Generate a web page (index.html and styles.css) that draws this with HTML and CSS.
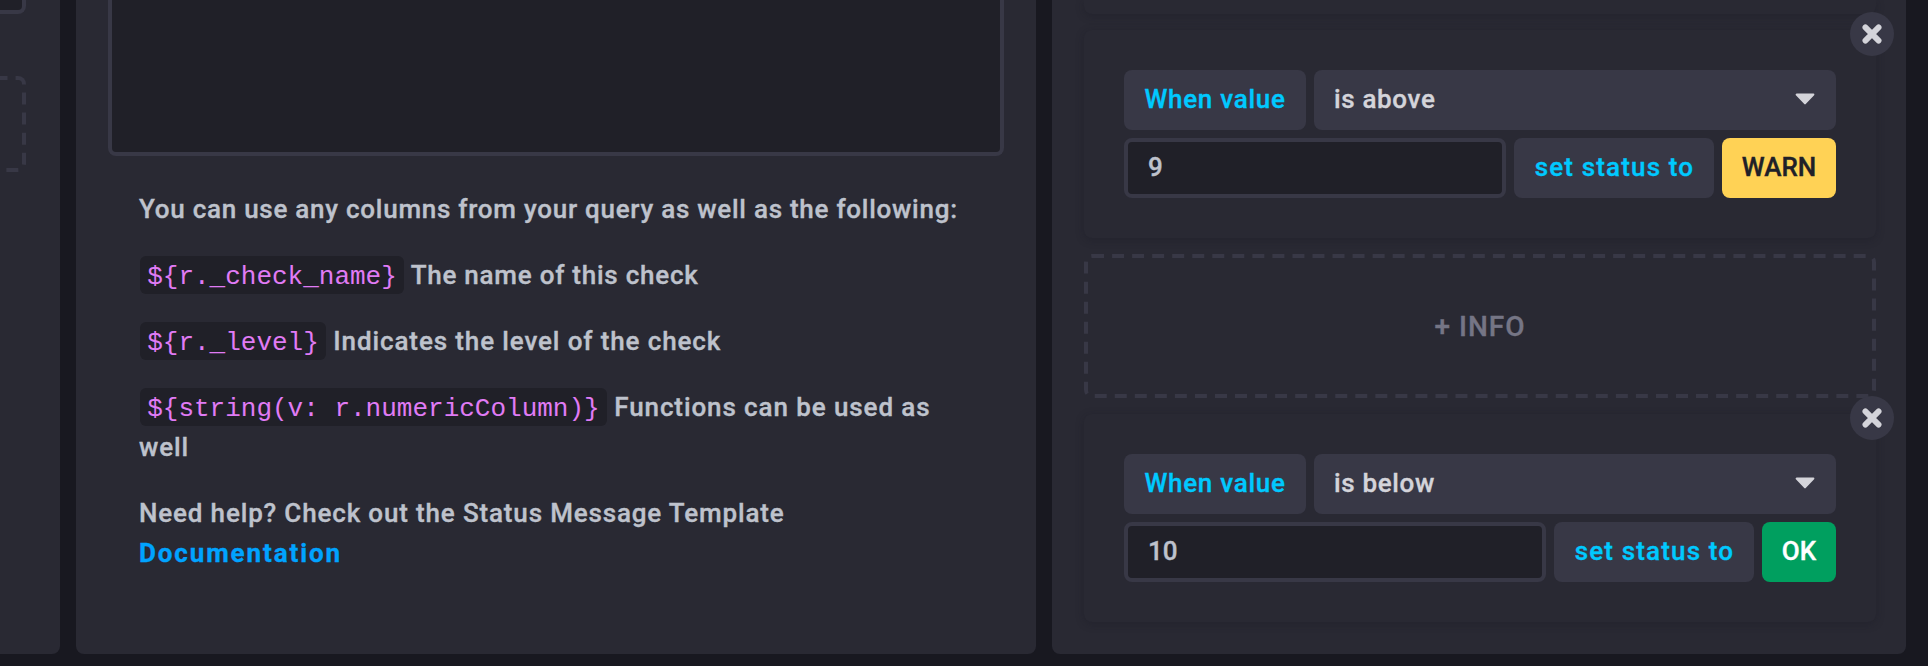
FILE: index.html
```
<!DOCTYPE html>
<html lang="en">
<head>
<meta charset="utf-8">
<title>Configure Check</title>
<link rel="stylesheet" href="styles.css">
</head>
<body>
<main class="builder">
  <section class="panel panel-props">
    <div class="field-end"></div>
    <div class="dashed dashed-tag"></div>
  </section>
  <section class="panel panel-message">
    <div class="editor"></div>
    <div class="help">
      <p class="l1">You can use any columns from your query as well as the following:</p>
      <p class="l2"><code>${r._check_name}</code> The name of this check</p>
      <p class="l3"><code>${r._level}</code> Indicates the level of the check</p>
      <p class="l4"><code>${string(v: r.numericColumn)}</code> Functions can be used as<br>well</p>
      <p class="l5">Need help? Check out the Status Message Template<br><a class="doc">Documentation</a></p>
    </div>
  </section>
  <section class="panel panel-thresholds">
    <div class="card card-cut"></div>
    <div class="card">
      <button class="close" aria-label="Remove"><svg width="20" height="20" viewBox="0 0 20 20"><path d="M3.4 3.4 16.6 16.6M16.6 3.4 3.4 16.6"/></svg></button>
      <div class="row">
        <div class="box label when"><span>When value</span></div>
        <div class="box dropdown"><span class="above">is above</span><svg width="20" height="12" viewBox="0 0 20 12"><path d="M1.6 1.6H18.4L10 10.4Z"/></svg></div>
      </div>
      <div class="row">
        <div class="box input">9</div>
        <div class="box label status"><span>set status to</span></div>
        <div class="box warn"><span>WARN</span></div>
      </div>
    </div>
    <div class="dashed dashed-info"><span>+ INFO</span></div>
    <div class="card">
      <button class="close" aria-label="Remove"><svg width="20" height="20" viewBox="0 0 20 20"><path d="M3.4 3.4 16.6 16.6M16.6 3.4 3.4 16.6"/></svg></button>
      <div class="row">
        <div class="box label when"><span>When value</span></div>
        <div class="box dropdown"><span class="below">is below</span><svg width="20" height="12" viewBox="0 0 20 12"><path d="M1.6 1.6H18.4L10 10.4Z"/></svg></div>
      </div>
      <div class="row">
        <div class="box input">10</div>
        <div class="box label status"><span>set status to</span></div>
        <div class="box ok"><span>OK</span></div>
      </div>
    </div>
  </section>
</main>
</body>
</html>
```
FILE: styles.css
```
*, *::before { box-sizing: border-box; }
body {
  margin: 0;
  height: 666px;
  overflow: hidden;
  background: #181820;
  font: 500 26px/40px Roboto, "Liberation Sans", sans-serif;
  color: #bec2cc;
  -webkit-text-stroke: .35px currentColor;
}
.builder {
  display: grid;
  grid-template-columns: 60px 960px 854px;
  gap: 16px;
  height: 654px;
}
.panel { background: #292933; border-radius: 0 0 8px 8px; }
.panel-props { border-bottom-left-radius: 0; border-bottom-right-radius: 8px; padding-right: 34px; }
.field-end {
  height: 14px;
  border: 4px solid #383846;
  border-width: 0 4px 4px 0;
  border-bottom-right-radius: 8px;
  background: #202028;
}
.dashed { position: relative; }
/* Scaled 2px border gives the longer 12/8 dash rhythm. */
.dashed::before {
  content: "";
  position: absolute;
  top: 0;
  left: 0;
  width: 50%;
  height: 50%;
  border: 2px dashed #383846;
  border-radius: 4px;
  transform: scale(2);
  transform-origin: 0 0;
}
.dashed-tag { width: 400px; height: 96px; margin: 62px 0 0 -374px; }
.panel-message { padding: 0 32px; }
.editor {
  height: 156px;
  border: 4px solid #383846;
  border-top: 0;
  border-radius: 0 0 8px 8px;
  background: #202028;
}
.help { padding: 33px 0 0 31px; white-space: nowrap; }
.help p { margin: 0 0 26px; }
.l1 { letter-spacing: .74px; }
.l2 { letter-spacing: .76px; }
.l3 { letter-spacing: .88px; }
.l4 { letter-spacing: .9px; }
.l5 { letter-spacing: .84px; }
code {
  display: inline-block;
  height: 38px;
  margin: 0 0 0 1px;
  padding: 0 7.2px;
  border-radius: 6px;
  background: #202028;
  color: #e07bf5;
  font: 400 26px/42px "Liberation Mono", monospace;
  letter-spacing: 0;
  vertical-align: baseline;
  -webkit-text-stroke: 0;
}
.help p:has(code) { height: 40px; }
.help p.l4 { height: 80px; }
.doc { color: #00a3ff; font-weight: 700; letter-spacing: 1.88px; }
.panel-thresholds {
  display: flex;
  flex-direction: column;
  gap: 16px;
  padding: 0 30px 32px 32px;
}
.card {
  position: relative;
  display: flex;
  flex-direction: column;
  gap: 8px;
  height: 208px;
  padding: 40px;
  border-radius: 8px;
  background: #292933;
  box-shadow: 0 2px 8px rgba(24, 24, 32, .3);
}
.card-cut { height: 14px; padding: 0; border-radius: 0 0 8px 8px; }
.close {
  position: absolute;
  top: -18px;
  right: -18px;
  display: grid;
  place-items: center;
  width: 44px;
  height: 44px;
  padding: 0 1px 0 0;
  border: 0;
  border-radius: 50%;
  background: #383846;
}
.close path { fill: none; stroke: #d4d4da; stroke-width: 5.8; stroke-linecap: round; }
.row { display: flex; gap: 8px; height: 60px; }
.box {
  display: flex;
  align-items: center;
  justify-content: center;
  padding-bottom: 2px;
  border-radius: 8px;
  background: #383846;
  white-space: nowrap;
}
.label { color: #00c9ff; }
.when { width: 182px; letter-spacing: .72px; }
.status { width: 200px; padding-left: 1px; letter-spacing: 1.15px; }
.dropdown { flex: 1; justify-content: space-between; padding: 0 21px 2px 20px; color: #d4d4da; letter-spacing: .65px; }
.dropdown path { fill: #d4d4da; stroke: #d4d4da; stroke-width: 2; stroke-linejoin: round; }
.input { flex: 1; justify-content: flex-start; padding-left: 20px; border: 4px solid #383846; background: #202028; letter-spacing: 0; }
.warn { width: 114px; background: #ffd255; color: #202028; }
.ok { width: 74px; background: #009f5f; color: #fff; }
.dashed-info {
  display: flex;
  align-items: center;
  justify-content: center;
  height: 144px;
  padding-top: 1px;
  font-size: 28px;
  letter-spacing: 1px;
  color: #757585;
}
```
